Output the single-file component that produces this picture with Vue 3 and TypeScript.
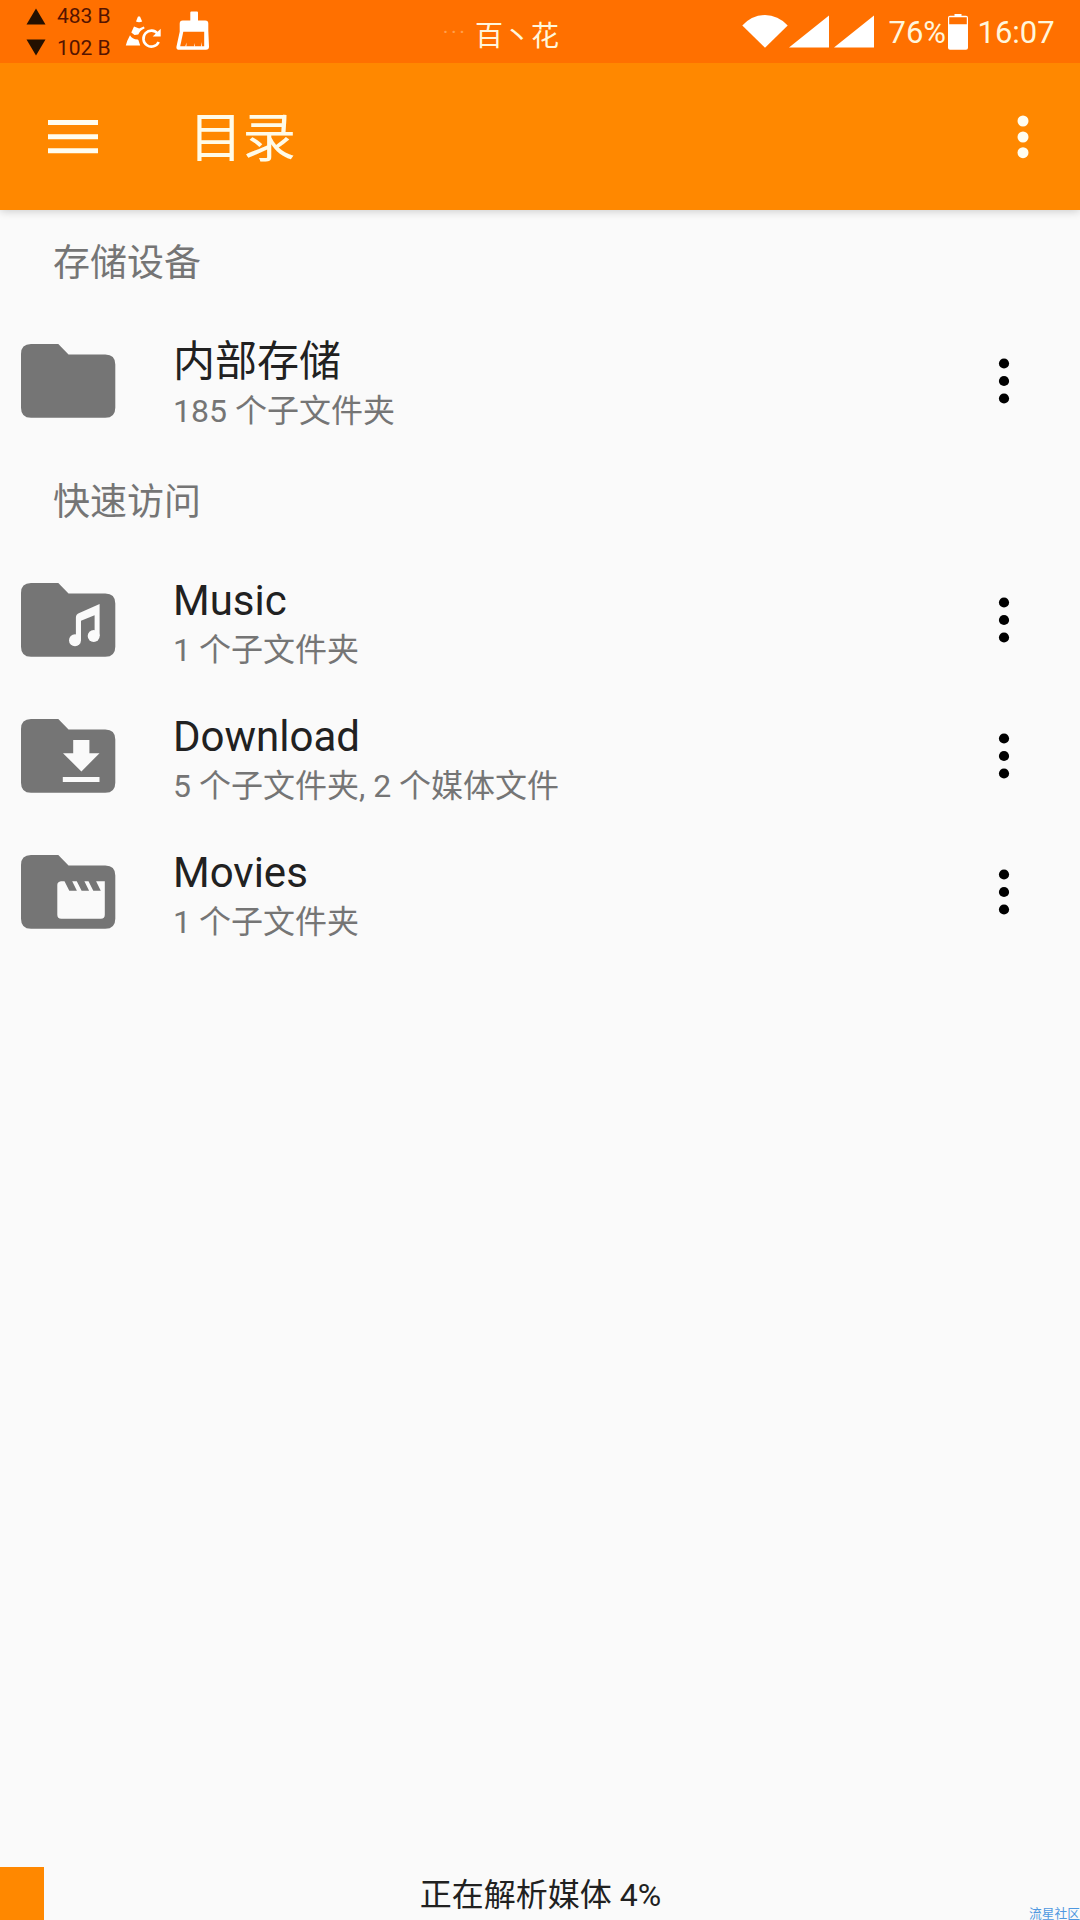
<script setup lang="ts">
type FolderKind = 'plain' | 'music' | 'download' | 'movies'

interface Folder {
  name: string
  detail: string
  kind: FolderKind
}

interface Section {
  title: string
  folders: Folder[]
}

const sections: Section[] = [
  {
    title: '存储设备',
    folders: [{ name: '内部存储', detail: '185 个子文件夹', kind: 'plain' }],
  },
  {
    title: '快速访问',
    folders: [
      { name: 'Music', detail: '1 个子文件夹', kind: 'music' },
      { name: 'Download', detail: '5 个子文件夹, 2 个媒体文件', kind: 'download' },
      { name: 'Movies', detail: '1 个子文件夹', kind: 'movies' },
    ],
  },
]

const progress = 4
</script>

<template>
  <div class="screen">
    <header class="status">
      <div class="traffic">
        <div class="rate">
          <svg width="20" height="17" viewBox="0 0 20 17"><path d="M10 0.5 19.5 16.5H0.5Z" /></svg>
          <span>483 B</span>
        </div>
        <div class="rate">
          <svg width="20" height="17" viewBox="0 0 20 17"><path d="M0.5 0.5H19.5L10 16.5Z" /></svg>
          <span>102 B</span>
        </div>
      </div>
      <svg class="cone" width="38" height="36" viewBox="125 14 38 36">
        <path d="M138 16.6h2l2.2 4.9q-3.2 1.5-6.2 0z" />
        <path d="M134 26.4l5.2 2 4.6-2 .9 1.8q-4.6 2-6.4 6.3l-3.8.4-3.2-2.5z" />
        <path d="M130 35.2q2 4 7.6 4.4 1 .2 1.2 1.6l1.4 4.4h-14.400l1.400-4.600z" />
        <path class="arc" d="M157.8 33.800a8 8 0 1 0 .9 8.200" />
        <path d="M160.700 28.800v7.800h-8z" />
      </svg>
      <svg class="brush" width="34" height="40" viewBox="176 10.500 34 40">
        <path
          d="M190.300 12q0-1 1-1h5.700q1 0 1 1v8h7.300q3 0 3 3v7l.7 16.300q0 3-3 3h-26.700q-3.400 0-2.800-3.300l3.200-14.700v-8.300q0-3 3-3h7.600z"
        />
        <path class="bristles" d="M183.300 31.300H204.200V45.700H180.200z" />
        <path d="M185.200 46 186.500 42 186.400 46zM194 46 194.800 42.500 195 46zM201 46 201.900 41.500 202 46z" />
      </svg>
      <div class="carrier"><span class="specks">...</span>百丶花</div>
      <div class="indicators">
        <svg width="46" height="34" viewBox="0 0 46 34"><path d="M.3 10.500Q10 0 23 0t22.700 10.500L23 32.800Z" /></svg>
        <svg class="signal" width="40" height="33" viewBox="0 0 40 33"><path d="M40 .5v32H0z" /></svg>
        <svg class="signal second" width="40" height="33" viewBox="0 0 40 33"><path d="M40 .5v32H0z" /></svg>
        <span class="percent">76%</span>
        <svg class="battery" width="20" height="36" viewBox="0 0 20 36">
          <path
            fill-rule="evenodd"
            d="M6.500 0h7v1.800h4.500q2 0 2 2v30q0 2-2 2h-16q-2 0-2-2v-30q0-2 2-2h4.500zM1.200 3.200v7h17.600v-7z"
          />
        </svg>
        <span class="clock">16:07</span>
      </div>
    </header>

    <nav class="toolbar">
      <svg class="menu" width="50" height="36" viewBox="0 0 50 36">
        <path d="M0 1h50v5H0zM0 15.200h50v5H0zM0 29.200h50v5H0z" />
      </svg>
      <h1>目录</h1>
      <svg class="more" width="12" height="44" viewBox="0 0 12 44">
        <circle cx="6" cy="6" r="5.500" /><circle cx="6" cy="22" r="5.500" /><circle cx="6" cy="37.700" r="5.500" />
      </svg>
    </nav>

    <main>
      <section v-for="section in sections" :key="section.title">
        <h2>{{ section.title }}</h2>
        <div v-for="folder in section.folders" :key="folder.name" class="row">
          <svg class="folder" width="96" height="76" viewBox="0 0 96 76">
            <path
              class="shape"
              d="M11 1H38.300L48.500 11.500H85.300q10 0 10 10V64.700q0 10-10 10H11q-10 0-10-10V11Q1 1 11 1z"
            />
            <template v-if="folder.kind === 'music'">
              <path
                d="M55.900 57V35.500q0-3.400 3.400-4.600L79.600 22V54H74.600V33.200L61 38.800V58z"
              />
              <circle cx="55" cy="58.300" r="6" />
              <circle cx="73.700" cy="54" r="6" />
            </template>
            <path
              v-else-if="folder.kind === 'download'"
              d="M53.200 22H69.400V35.300H79.500L61.400 53.400 43 35.300H53.200zM42.800 59H79.500V64H42.800z"
            />
            <path
              v-else-if="folder.kind === 'movies'"
              d="M41 27.300H44.500L49.300 36.700H56.900L52.200 27.300H56.800L61.600 36.700H69.100L64.400 27.300H68.500L73.300 36.700H80.800L76.100 27.300H84.800V60.700q0 4-4 4H41.300q-4 0-4-4V31Q37.300 28 41 27.300z"
            />
          </svg>
          <div class="text">
            <div class="name">{{ folder.name }}</div>
            <div class="detail">{{ folder.detail }}</div>
          </div>
          <svg class="options" width="12" height="46" viewBox="0 0 12 46">
            <circle cx="6" cy="5.500" r="5.100" /><circle cx="6" cy="23" r="5.100" /><circle cx="6" cy="40.500" r="5.100" />
          </svg>
        </div>
      </section>
    </main>

    <footer>
      <div class="bar" :style="{ width: progress * 1.02 + '%' }"></div>
      <span class="scan">正在解析媒体 {{ progress }}%</span>
      <span class="mark">流星社区</span>
    </footer>
  </div>
</template>

<style>
body {
  margin: 0;
}
</style>

<style scoped>
.screen {
  display: flex;
  flex-direction: column;
  width: 1080px;
  height: 1920px;
  overflow: hidden;
  background: #fafafa;
  font-family: Roboto, "Noto Sans CJK SC", sans-serif;
  color: #212121;
}
svg {
  display: block;
  flex: none;
}
.status {
  position: relative;
  display: flex;
  align-items: flex-start;
  box-sizing: border-box;
  height: 63px;
  flex: none;
  padding-left: 26px;
  background: #ff7000;
  fill: #fff;
  color: #fff6dc;
}
.traffic {
  display: flex;
  flex-direction: column;
  width: 99px;
  color: #551400;
  fill: #241000;
}
.rate {
  display: flex;
  align-items: center;
  gap: 11px;
  height: 31.500px;
  padding-top: 1px;
  box-sizing: border-box;
  font-size: 21px;
  white-space: nowrap;
}
.cone {
  margin-top: 14px;
}
.arc {
  fill: none;
  stroke: #fff;
  stroke-width: 2.600;
}
.brush {
  margin: 10.500px 0 0 13px;
}
.bristles {
  fill: #ff7000;
}
.carrier {
  display: flex;
  margin: 16px 0 0 231px;
  font-size: 28px;
  line-height: 42px;
}
.specks {
  width: 32px;
  margin-left: 2px;
  font-size: 20px;
  line-height: 20px;
  letter-spacing: 3px;
  opacity: 0.350;
}
.indicators {
  display: flex;
  margin-left: auto;
  padding: 15px 26px 0 0;
  font-size: 31px;
  line-height: 36px;
}
.signal {
  margin-left: 1px;
}
.second {
  margin-left: 5px;
}
.percent {
  width: 59.500px;
  margin-left: 14.500px;
}
.battery {
  margin-top: -1px;
}
.clock {
  width: 76.500px;
  margin-left: 9.500px;
}
.toolbar {
  display: flex;
  align-items: center;
  box-sizing: border-box;
  height: 147px;
  flex: none;
  padding: 0 51.500px 0 48px;
  background: #ff8800;
  fill: #fffdf0;
  box-shadow: 0 1px 9px rgba(0, 0, 0, 0.200);
}
h1 {
  margin: 4px 0 0 91px;
  font-size: 53.500px;
  font-weight: 400;
  line-height: 62px;
  color: #fffbe8;
}
.more {
  margin-left: auto;
}
h2 {
  box-sizing: border-box;
  height: 103px;
  margin: 0;
  padding: 5px 0 0 53px;
  font-size: 37px;
  font-weight: 400;
  line-height: 98px;
  color: #757575;
}
.row {
  display: flex;
  align-items: center;
  height: 136px;
  padding: 0 70px 0 20px;
}
.folder {
  fill: #fafafa;
}
.shape {
  fill: #757575;
}
.text {
  display: flex;
  flex-direction: column;
  gap: 5px;
  flex: 1;
  padding: 5px 0 0 57px;
}
.name {
  font-size: 42px;
  line-height: 50px;
}
.detail {
  font-size: 32px;
  line-height: 38px;
  color: #757575;
}
.options {
  fill: #000;
}
footer {
  position: relative;
  display: flex;
  height: 53px;
  margin-top: auto;
}
.bar {
  background: #ff8800;
}
.scan {
  position: absolute;
  inset: 0 0 0 1px;
  text-align: center;
  font-size: 32px;
  line-height: 57px;
}
.mark {
  position: absolute;
  right: 0;
  bottom: -3px;
  font-size: 12.750px;
  line-height: 19px;
  color: #4f98e0;
}
</style>
